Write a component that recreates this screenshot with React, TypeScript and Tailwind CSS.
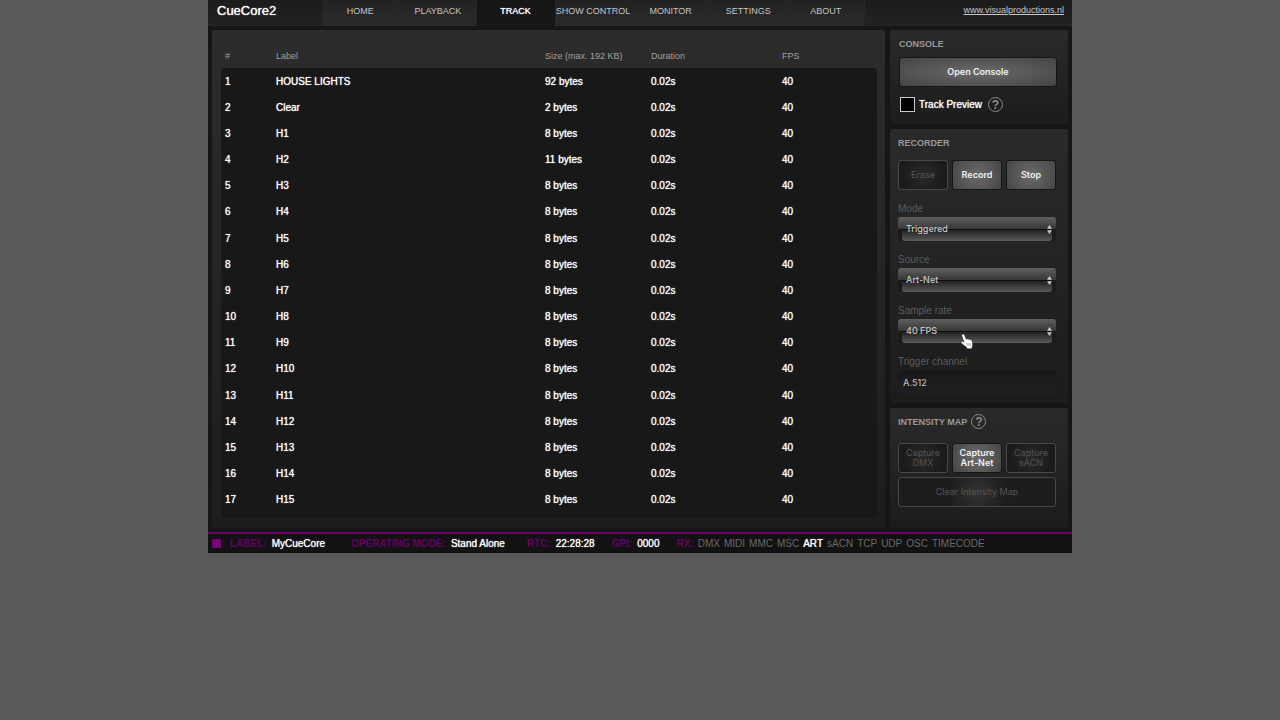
import { useState } from 'react';
import { clsx } from 'clsx';

const NAV_ITEMS = ['HOME', 'PLAYBACK', 'TRACK', 'SHOW CONTROL', 'MONITOR', 'SETTINGS', 'ABOUT'];

const TRACKS = [
  { label: 'HOUSE LIGHTS', size: 92 },
  { label: 'Clear', size: 2 },
  { label: 'H1', size: 8 },
  { label: 'H2', size: 11 },
  { label: 'H3', size: 8 },
  { label: 'H4', size: 8 },
  { label: 'H5', size: 8 },
  { label: 'H6', size: 8 },
  { label: 'H7', size: 8 },
  { label: 'H8', size: 8 },
  { label: 'H9', size: 8 },
  { label: 'H10', size: 8 },
  { label: 'H11', size: 8 },
  { label: 'H12', size: 8 },
  { label: 'H13', size: 8 },
  { label: 'H14', size: 8 },
  { label: 'H15', size: 8 },
];

const PROTOCOLS = ['DMX', 'MIDI', 'MMC', 'MSC', 'ART', 'sACN', 'TCP', 'UDP', 'OSC', 'TIMECODE'];

function PanelButton({ children, disabled, wide }: { children: React.ReactNode; disabled?: boolean; wide?: boolean }) {
  return (
    <button
      disabled={disabled}
      className={clsx(
        "h-[30px] w-full rounded-[3px] border text-center font-['Inter',sans-serif] text-[9px] leading-[10px]",
        disabled
          ? 'border-[#484848] text-[#545454]'
          : 'border-[#161616] font-semibold text-[#f0f0f0]',
        disabled && !wide && 'bg-[radial-gradient(circle,#2a2a2a,#1b1b1b_75%)]',
        disabled && wide && 'bg-[radial-gradient(circle,#343434,#1d1d1d_28px)]',
        !disabled && !wide && 'bg-[radial-gradient(circle,#6a6a6a,#464646)]',
        !disabled && wide && 'bg-[radial-gradient(ellipse,#6a6a6a,#444444)]'
      )}
    >
      {children}
    </button>
  );
}

function HelpButton({ label }: { label: string }) {
  return (
    <button
      aria-label={label}
      className="flex size-[15px] items-center justify-center rounded-full border border-[#8a8a8a] text-[12px] leading-none font-bold text-[#8a8a8a]"
    >
      ?
    </button>
  );
}

function SelectField({ id, label, options }: { id: string; label: string; options: string[] }) {
  return (
    <div className="pb-[13px]">
      <label htmlFor={id} className="block text-[10px] leading-[12px] text-[#5c5c5c]">{label}</label>
      <div className="mt-[2px] grid h-[24px] items-center">
        <div className="col-start-1 row-start-1 flex h-full flex-col rounded-[3px] bg-[#1a1a1a]">
          <div className="h-[12px] rounded-t-[3px] bg-linear-to-b from-[#606060] to-[#373737]" />
          <div className="mx-1 h-[12px] rounded-b-[3px] border-t border-[#0e0e0e] bg-linear-to-b from-[#222222] to-[#5a5a5a]" />
        </div>
        <select
          id={id}
          className="col-start-1 row-start-1 h-[24px] w-full appearance-none bg-transparent px-2 font-['Inter',sans-serif] text-[9px] font-medium text-[#c8c8c8] outline-none"
        >
          {options.map((o) => (
            <option key={o}>{o}</option>
          ))}
        </select>
        <svg className="pointer-events-none col-start-1 row-start-1 mr-1 h-[9px] w-[5px] justify-self-end" viewBox="0 0 5 9" fill="#c8c8c8">
          <path d="M2.5 0 5 3.8H0zM2.5 9 0 5.2h5z" />
        </svg>
      </div>
    </div>
  );
}

function HandCursor() {
  return (
    <svg className="pointer-events-none absolute top-[28px] left-[62px] h-[17px] w-[14px]" viewBox="0 0 13 16">
      <path
        d="M2.2 1.2c.9-.6 1.7 0 2.1 1l1.500 3.600c.4-.6 1.500-.6 1.800.2.5-.5 1.500-.4 1.800.4.8-.4 1.700.1 1.900 1l.6 2.800c.2 1.200-.1 2.200-.6 3v1.700H6.200v-1.200C4.800 12.800 3.500 11.300 2 10.300 1.100 9.700.5 8.900.9 8.300c.5-.7 1.500-.5 2.700.3L1.700 3.100c-.3-.8-.2-1.500.5-1.900z"
        fill="#fff"
        stroke="#222"
        strokeWidth=".6"
      />
      <path d="M6.600 9.500v2.500M8.300 9.500v2.500M10 9.500v2.500" stroke="#555" strokeWidth=".5" />
    </svg>
  );
}

function StatusItem({ name, value }: { name: string; value: string }) {
  return (
    <div className="flex gap-[5px]">
      <span className="font-bold text-[#640064]">{name}:</span>
      <span className="text-white [text-shadow:0_0_1px_#fff]">{value}</span>
    </div>
  );
}

export default function App() {
  const [tab, setTab] = useState('TRACK');
  const [preview, setPreview] = useState(false);

  return (
    <div className="min-h-screen bg-[#595959] font-['Liberation_Sans',Arial,sans-serif]">
      <div className="mx-auto w-full max-w-[864px] bg-[#161616]">
        <header className="flex h-[26px] bg-linear-to-b from-[#1b1b1b] to-[#232323] pr-2">
          <h1 className="w-[114px] shrink-0 pl-[9px] text-[13px] leading-[21px] text-white [text-shadow:0_0_1px_#fff]">CueCore2</h1>
          <nav className="grid max-w-[543px] flex-1 grid-cols-7">
            {NAV_ITEMS.map((item) => (
              <button
                key={item}
                onClick={() => setTab(item)}
                className={clsx(
                  'border-r pb-[2px] text-[9px] whitespace-nowrap',
                  tab === item
                    ? 'border-[#161616] bg-[#161616] text-white [text-shadow:0_0_1px_#fff]'
                    : 'border-[#252525] bg-linear-to-b from-[#222222] to-[#2b2b2b] text-[#c4c4c4]'
                )}
              >
                {item}
              </button>
            ))}
          </nav>
          <a href="http://www.visualproductions.nl" className="ml-auto text-[9px] leading-[20px] text-[#c8c8c8] underline">
            www.visualproductions.nl
          </a>
        </header>

        <main className="flex gap-[5px] p-1">
          <section className="min-w-0 flex-1 rounded-[3px] bg-linear-to-b from-[#2c2c2c] to-[#1d1d1d] pt-[15px] pr-2 pb-[10px] pl-[9px]">
            <table className="h-[468px] w-full table-fixed border-separate border-spacing-0 text-left">
              <thead>
                <tr className="h-[23px] text-[9px] text-[#a0a0a0]">
                  <th className="w-[51px] pl-1 font-normal">#</th>
                  <th className="pl-1 font-normal">Label</th>
                  <th className="w-[106px] pl-1 font-normal">Size (max. 192 KB)</th>
                  <th className="w-[131px] pl-1 font-normal">Duration</th>
                  <th className="w-[99px] pl-1 font-normal">FPS</th>
                </tr>
              </thead>
              <tbody className="text-[10px] text-white [text-shadow:0_0_1px_#fff] [&_td]:bg-[#181818] [&_td]:p-0 [&_td]:pl-1">
                {TRACKS.map((track, i) => (
                  <tr key={track.label} className="first:[&>td:first-child]:rounded-tl-[4px] first:[&>td:last-child]:rounded-tr-[4px]">
                    <td>{i + 1}</td>
                    <td>{track.label}</td>
                    <td>{track.size} bytes</td>
                    <td>0.02s</td>
                    <td>40</td>
                  </tr>
                ))}
              </tbody>
            </table>
            <div className="h-[5px] rounded-b-[4px] bg-[#181818]" />
          </section>

          <aside className="flex w-[178px] shrink-0 flex-col gap-[5px]">
            <section className="h-[94px] rounded-[3px] bg-linear-to-b from-[#2a2a2a] to-[#1c1c1c] pt-2 pr-[11px] pl-[9px]">
              <h2 className="text-[9px] leading-[12px] font-bold text-[#9a9a9a]">CONSOLE</h2>
              <div className="mt-[7px]">
                <PanelButton wide>Open Console</PanelButton>
              </div>
              <div className="mt-[10px] flex items-center gap-[6px] pl-px">
                <label className="flex items-center gap-1 text-[10px] text-white [text-shadow:0_0_1px_#fff]">
                  <input
                    type="checkbox"
                    checked={preview}
                    onChange={(e) => setPreview(e.target.checked)}
                    className="size-[15px] appearance-none border border-[#c8c8c8] bg-black checked:bg-[#800080]"
                  />
                  Track Preview
                </label>
                <HelpButton label="About track preview" />
              </div>
            </section>

            <section className="rounded-[3px] bg-linear-to-b from-[#2a2a2a] to-[#1c1c1c] pt-2 pr-[12px] pb-[9px] pl-2">
              <h2 className="text-[9px] leading-[12px] font-bold text-[#9a9a9a]">RECORDER</h2>
              <div className="mt-[11px] mb-[13px] grid grid-cols-3 gap-1">
                <PanelButton disabled>Erase</PanelButton>
                <PanelButton>Record</PanelButton>
                <PanelButton>Stop</PanelButton>
              </div>
              <SelectField id="mode" label="Mode" options={['Triggered', 'Continuous']} />
              <SelectField id="source" label="Source" options={['Art-Net', 'DMX', 'sACN']} />
              <div className="relative">
                <SelectField id="rate" label="Sample rate" options={['40 FPS', '30 FPS', '20 FPS']} />
                <HandCursor />
              </div>
              <label htmlFor="trigger" className="block text-[10px] leading-[12px] text-[#5c5c5c]">Trigger channel</label>
              <input
                id="trigger"
                defaultValue="A.512"
                className="mt-[2px] h-[24px] w-full bg-linear-to-b from-[#191919] to-[#1f1f1f] px-[5px] font-['Inter',sans-serif] text-[9px] font-medium text-[#b8b8b8] outline-none"
              />
            </section>

            <section className="flex-1 rounded-[3px] bg-linear-to-b from-[#2a2a2a] to-[#1c1c1c] pt-[6px] pr-[12px] pl-2">
              <div className="flex items-center gap-1">
                <h2 className="text-[9px] leading-[12px] font-bold text-[#9a9a9a]">INTENSITY MAP</h2>
                <HelpButton label="About the intensity map" />
              </div>
              <div className="mt-[14px] mb-1 grid grid-cols-3 gap-1">
                <PanelButton disabled>Capture DMX</PanelButton>
                <PanelButton>Capture Art-Net</PanelButton>
                <PanelButton disabled>Capture sACN</PanelButton>
              </div>
              <PanelButton disabled wide>Clear Intensity Map</PanelButton>
            </section>
          </aside>
        </main>

        <footer className="flex h-[21px] items-center border-t-2 border-[#6d006d] bg-[#121212] pl-1 text-[10px] whitespace-nowrap">
          <div className="mr-[9px] size-[9px] bg-[#780078]" />
          <div className="flex gap-[26px]">
            <StatusItem name="LABEL" value="MyCueCore" />
            <StatusItem name="OPERATING MODE" value="Stand Alone" />
          </div>
          <div className="ml-[22px] flex gap-[17px]">
            <StatusItem name="RTC" value="22:28:28" />
            <StatusItem name="GPI" value="0000" />
            <div className="flex gap-1">
              <span className="font-bold text-[#640064]">RX:</span>
              {PROTOCOLS.map((p) => (
                <span key={p} className={p === 'ART' ? 'text-white [text-shadow:0_0_1px_#fff]' : 'text-[#6a6a6a]'}>{p}</span>
              ))}
            </div>
          </div>
        </footer>
      </div>
    </div>
  );
}
